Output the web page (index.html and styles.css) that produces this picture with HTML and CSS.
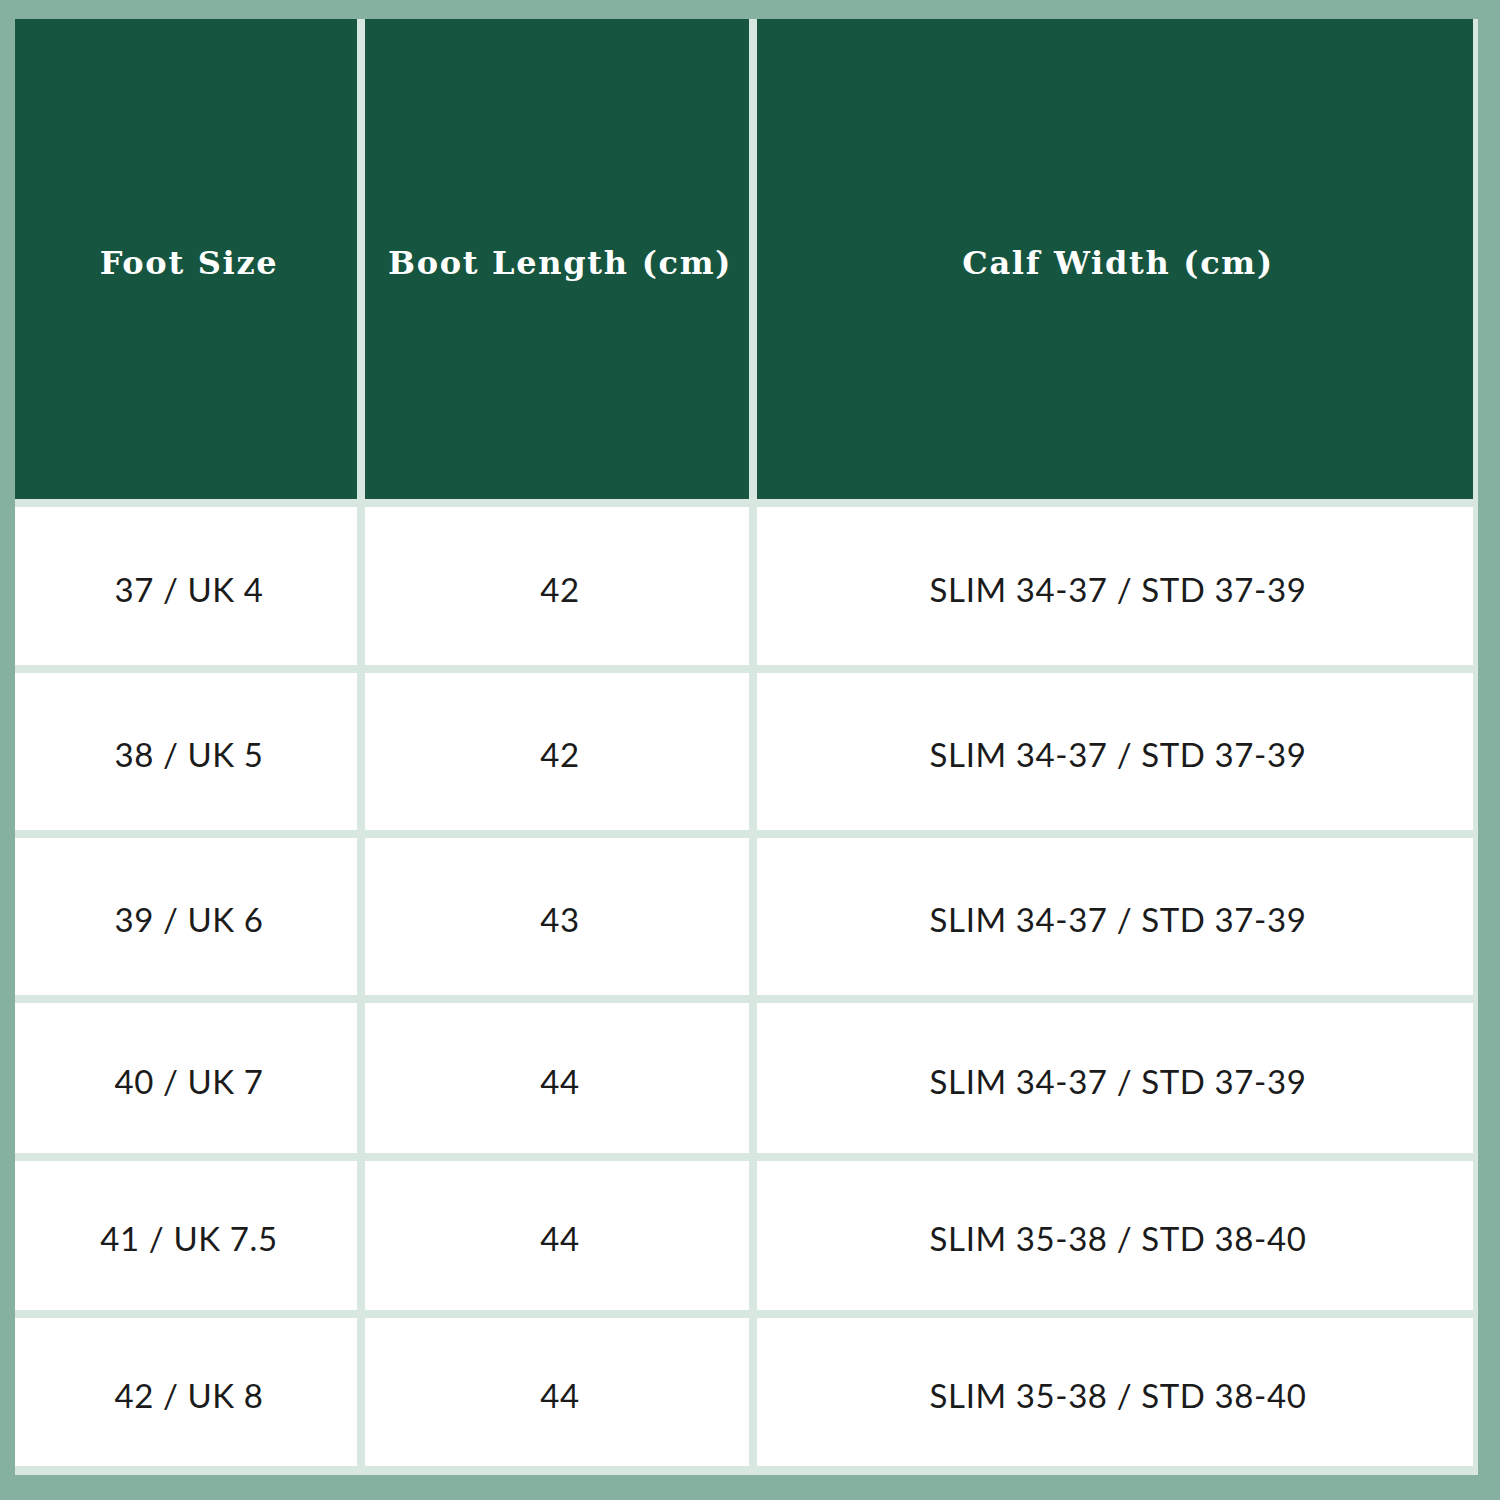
FILE: index.html
```html
<!DOCTYPE html>
<html>
<head>
<meta charset="utf-8">
<link rel="stylesheet" href="styles.css">
</head>
<body>
<div class="page">
  <div class="table">
    <div class="cell head">Foot Size</div>
    <div class="cell head">Boot Length (cm)</div>
    <div class="cell head">Calf Width (cm)</div>

    <div class="cell">37 / UK 4</div>
    <div class="cell">42</div>
    <div class="cell">SLIM 34-37 / STD 37-39</div>

    <div class="cell">38 / UK 5</div>
    <div class="cell">42</div>
    <div class="cell">SLIM 34-37 / STD 37-39</div>

    <div class="cell">39 / UK 6</div>
    <div class="cell">43</div>
    <div class="cell">SLIM 34-37 / STD 37-39</div>

    <div class="cell">40 / UK 7</div>
    <div class="cell">44</div>
    <div class="cell">SLIM 34-37 / STD 37-39</div>

    <div class="cell">41 / UK 7.5</div>
    <div class="cell">44</div>
    <div class="cell">SLIM 35-38 / STD 38-40</div>

    <div class="cell">42 / UK 8</div>
    <div class="cell">44</div>
    <div class="cell">SLIM 35-38 / STD 38-40</div>
  </div>
</div>
</body>
</html>
```
FILE: styles.css
```css
html, body {
  margin: 0;
  padding: 0;
  background: #86b1a1;
}
.page {
  width: 1500px;
  height: 1500px;
  padding: 19px 0 0 15px;
  box-sizing: border-box;
}
.table {
  width: 1463px;
  box-sizing: border-box;
  background: #d8e8e0;
  padding: 0 5px 9px 0;
  display: grid;
  grid-template-columns: 342px 384px 716px;
  grid-template-rows: 480px 158px 157px 157px 150px 149px 148px;
  column-gap: 8px;
  row-gap: 8px;
}
.cell {
  display: flex;
  align-items: center;
  justify-content: center;
  background: #ffffff;
  color: #1b1b1b;
  font-family: Lato, "Liberation Sans", sans-serif;
  font-size: 33px;
  letter-spacing: 0.6px;
  padding: 5px 0 0 6px;
}
.head {
  background: #16553f;
  color: #ffffff;
  font-family: "DejaVu Serif", serif;
  font-weight: bold;
  font-size: 32px;
  letter-spacing: 1.7px;
  padding: 8px 0 0 6px;
}
```
